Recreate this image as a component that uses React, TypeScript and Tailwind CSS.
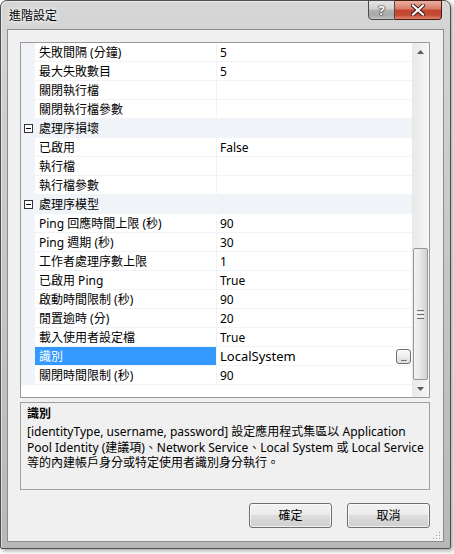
import React from "react";

type Row =
  | { type: "cat"; label: string }
  | { type: "prop"; label: string; value?: string; selected?: boolean };

const rows: Row[] = [
  { type: "prop", label: "失敗間隔 (分鐘)", value: "5" },
  { type: "prop", label: "最大失敗數目", value: "5" },
  { type: "prop", label: "關閉執行檔" },
  { type: "prop", label: "關閉執行檔參數" },
  { type: "cat", label: "處理序損壞" },
  { type: "prop", label: "已啟用", value: "False" },
  { type: "prop", label: "執行檔" },
  { type: "prop", label: "執行檔參數" },
  { type: "cat", label: "處理序模型" },
  { type: "prop", label: "Ping 回應時間上限 (秒)", value: "90" },
  { type: "prop", label: "Ping 週期 (秒)", value: "30" },
  { type: "prop", label: "工作者處理序數上限", value: "1" },
  { type: "prop", label: "已啟用 Ping", value: "True" },
  { type: "prop", label: "啟動時間限制 (秒)", value: "90" },
  { type: "prop", label: "閒置逾時 (分)", value: "20" },
  { type: "prop", label: "載入使用者設定檔", value: "True" },
  { type: "prop", label: "識別", value: "LocalSystem", selected: true },
  { type: "prop", label: "關閉時間限制 (秒)", value: "90" },
];

function MinusBox() {
  return (
    <svg width="9" height="9" viewBox="0 0 9 9">
      <rect x="0.5" y="0.5" width="8" height="8" fill="#fff" stroke="#333" />
      <path d="M2 4.5h5" stroke="#000" />
    </svg>
  );
}

function Arrow({ down }: { down?: boolean }) {
  return (
    <svg width="7" height="4" viewBox="0 0 7 4">
      <path d={down ? "M0 0h7L3.5 4z" : "M0 4h7L3.5 0z"} fill="#5a5a5a" />
    </svg>
  );
}

function GridRow({ row }: { row: Row }) {
  if (row.type === "cat") {
    return (
      <div className="flex h-[19px] items-center bg-[#f0f4f9]">
        <div className="flex w-[14px] justify-center">
          <MinusBox />
        </div>
        <div className="pt-[1px] pl-[4px] leading-none">{row.label}</div>
      </div>
    );
  }
  return (
    <div className="flex h-[19px]">
      <div className="w-[14px] bg-[#f0f4f9]" />
      <div
        className={
          "flex w-[182px] items-center border-r border-b border-[#f0f4f9] pt-[1px] pl-[4px] whitespace-nowrap " +
          (row.selected ? "bg-[#3399ff] text-white" : "")
        }
      >
        {row.label}
      </div>
      <div className="flex flex-1 items-center justify-between border-b border-[#f0f4f9] pt-[1px] pl-[3px]">
        {row.selected ? (
          <>
            <span className="text-[13px]">{row.value}</span>
            <div className="mr-[1px] flex h-[15px] w-[15px] items-end justify-center rounded-[3px] border border-[#707070] bg-linear-to-b from-[#fafafa] to-[#dedede] pb-[1px] text-[9px] leading-none tracking-[-0.5px]">
              ...
            </div>
          </>
        ) : (
          <span>{row.value ?? ""}</span>
        )}
      </div>
    </div>
  );
}

function ScrollBar() {
  return (
    <div className="flex w-[17px] flex-col bg-linear-to-r from-[#e8e8e8] to-[#f6f6f6]">
      <div className="flex h-[17px] items-center justify-center">
        <Arrow />
      </div>
      <div className="flex flex-1 flex-col justify-end px-px">
        <div className="flex h-[132px] flex-col items-center justify-center gap-[1px] rounded-[2px] border border-[#979797] bg-linear-to-r from-[#f4f4f4] via-[#e6e6e6] to-[#d0d0d0]">
          <div className="h-[1px] w-[7px] bg-[#6f6f6f]" />
          <div className="h-[1px] w-[7px] bg-[#fafafa]" />
          <div className="h-[1px] w-[7px] bg-[#6f6f6f]" />
          <div className="h-[1px] w-[7px] bg-[#fafafa]" />
          <div className="h-[1px] w-[7px] bg-[#6f6f6f]" />
        </div>
      </div>
      <div className="flex h-[17px] items-center justify-center">
        <Arrow down />
      </div>
    </div>
  );
}

function DialogButton({ label }: { label: string }) {
  return (
    <button className="flex h-[25px] w-[83px] items-center justify-center rounded-[3px] border border-[#707070] bg-[linear-gradient(#f2f2f2_0%,#ebebeb_50%,#dddddd_50%,#cfcfcf_100%)] text-[12px] text-black shadow-[inset_0_0_0_1px_rgba(255,255,255,0.7)]">
      {label}
    </button>
  );
}

function ResizeGrip() {
  const dots = [
    [6, 0],
    [3, 3],
    [6, 3],
    [0, 6],
    [3, 6],
    [6, 6],
  ];
  return (
    <svg width="8" height="8" viewBox="0 0 8 8" className="absolute right-[2px] bottom-[1px]">
      {dots.map(([x, y], i) => (
        <g key={i}>
          <rect x={x + 1} y={y + 1} width="1" height="1" fill="#fff" />
          <rect x={x} y={y} width="1" height="1" fill="#9a9a9a" />
        </g>
      ))}
    </svg>
  );
}

export default function App() {
  return (
    <div className="h-[554px] w-[454px] bg-white font-['Noto_Sans','Noto_Sans_CJK_TC',sans-serif] text-[12px] text-black">
      <div className="flex h-[549px] w-[451px] flex-col rounded-t-[7px] rounded-b-[2px] border border-[#4e4e4e] bg-linear-to-b from-[#d6d6d6] via-[#c6c6c6] to-[#b8b8b8] shadow-[2px_2px_4px_rgba(0,0,0,0.35),inset_1px_1px_0_rgba(255,255,255,0.5)]">
        {/* title bar */}
        <div className="flex h-[28px] items-start pl-[8px] pr-[8px]">
          <div className="self-center pt-[1px] text-[12px] text-black [text-shadow:0_0_6px_#fff,0_0_3px_#fff]">
            進階設定
          </div>
          <div className="-mt-px ml-auto flex">
            <div className="flex h-[20px] w-[27px] items-center justify-center rounded-bl-[4px] border border-[#4a4a4a] bg-[linear-gradient(#e4e4e4_0%,#d0d0d0_45%,#b2b2b2_50%,#a9a9a9_80%,#c4c4c4_100%)] text-[13px] font-bold leading-none text-white [text-shadow:0_0_1px_#333,0_0_1px_#333,0_0_2px_#333]">
              ?
            </div>
            <div className="flex h-[20px] w-[47px] items-center justify-center rounded-br-[4px] border border-l-0 border-[#4a1a12] bg-[linear-gradient(#eab0a2_0%,#d87a68_45%,#c44530_50%,#c24a34_78%,#e3866c_100%)]">
              <svg width="14" height="12" viewBox="0 0 14 12">
                <path d="M2 1.5l10 9M12 1.5l-10 9" stroke="#3b1510" strokeWidth="4" strokeLinecap="square" />
                <path d="M2 1.5l10 9M12 1.5l-10 9" stroke="#fff" strokeWidth="2.2" strokeLinecap="square" />
              </svg>
            </div>
          </div>
        </div>

        {/* client area */}
        <div className="relative mx-[6px] flex h-[513px] flex-col border border-[#8c8c8c] bg-[#f0f0f0] px-[12px] pt-[12px]">
          <div className="flex h-[356px] w-[410px] border border-[#9a9a9a] bg-white">
            <div className="flex w-[391px] flex-col">
              {rows.map((r, i) => (
                <GridRow key={i} row={r} />
              ))}
            </div>
            <ScrollBar />
          </div>

          <div className="mt-[4px] h-[88px] w-[410px] border border-[#a0a0a0] px-[6px] pt-[3px]">
            <div className="text-[12px] leading-[16px] font-bold">識別</div>
            <div className="mt-[2px] text-[12px] leading-[15.5px] whitespace-nowrap">
              [identityType, username, password] 設定應用程式集區以 Application
              <br />
              Pool Identity (建議項)、Network Service、Local System 或 Local Service
              <br />
              等的內建帳戶身分或特定使用者識別身分執行。
            </div>
          </div>

          <div className="mt-[13px] flex w-[410px] justify-end gap-[15px]">
            <DialogButton label="確定" />
            <DialogButton label="取消" />
          </div>
          <ResizeGrip />
        </div>
      </div>
    </div>
  );
}
